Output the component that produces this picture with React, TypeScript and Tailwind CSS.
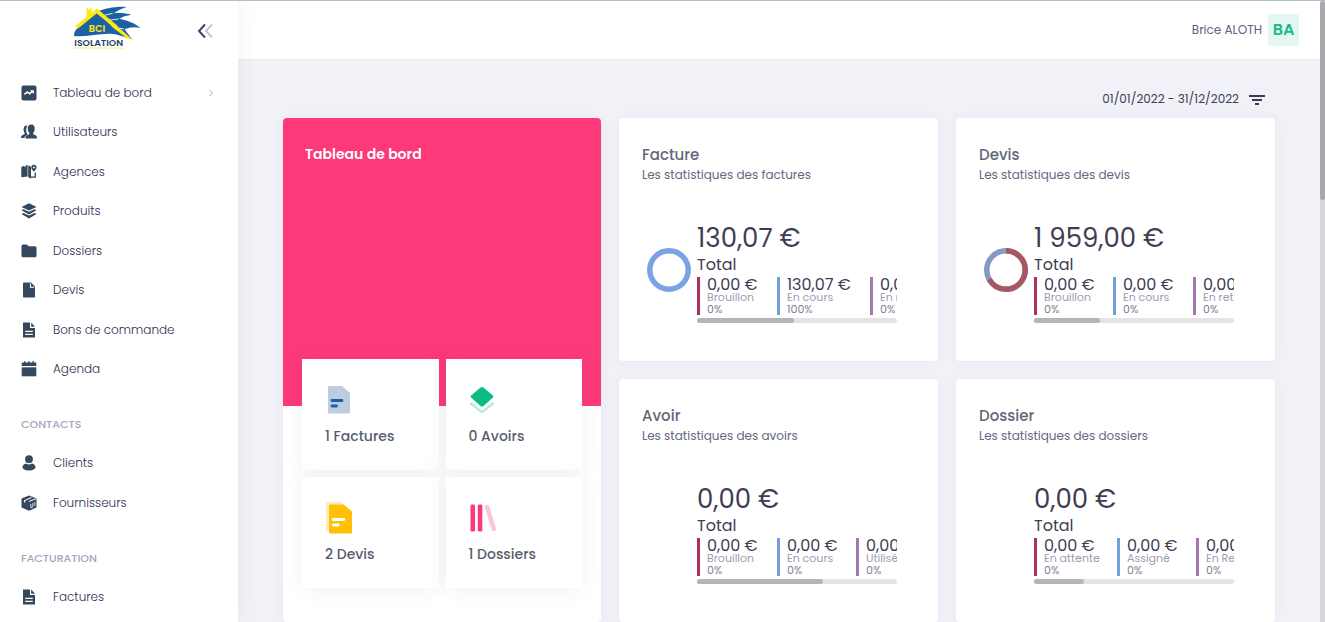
import type { ReactNode } from "react";

const ICONS: Record<string, ReactNode> = {
  board: (
    <>
      <rect x="0.5" y="0.5" width="15" height="15" rx="2" />
      <path d="M3.4 9.4 6.3 7l2.200 1.700L11.400 6.400" fill="none" stroke="#fff" strokeWidth="1.500" />
      <path d="M8.800 5.200h4v3.800z" fill="#fff" />
    </>
  ),
  users: (
    <>
      <path d="M6 1.400C3.400 1.400 2.300 3.400 2.600 6c.1 1.400.6 2.400 1.200 3.100-.1 1-.6 1.300-2 1.800C.6 11.500 0 12.200 0 14h3.400c.1-1.400 1-2.300 2.900-3.200.3-.2.2-.6-.2-1.200C5 8 4.700 4 6.600 1.500z" />
      <path d="M10.400.6C7.800.6 6.600 2.200 6.800 4.900c.1 1.900.8 3.200 1.600 4 0 1.200-.4 1.600-1.900 2.200C4.800 11.800 4.400 12.600 4.400 14.500H16c0-2-.5-2.700-2.200-3.400-1.300-.6-1.700-1-1.700-2.200.8-.8 1.500-2.100 1.600-4C13.900 2.200 12.700.6 10.400.6z" />
    </>
  ),
  map: (
    <>
      <path d="M.3 2.800h1.500V2h1.500v.8h1.300V1.300h2v11.200L.3 13.300z" />
      <path d="M7.200 1.200l2.800 1.500v12l-2.800-1.600z" />
      <path d="M12.900.8a2.600 2.600 0 0 0-2.600 2.600c0 1.900 2.600 4 2.600 4s2.600-2.100 2.600-4A2.600 2.600 0 0 0 12.900.8zm0 1.700a.9.900 0 1 1 0 1.800.9.900 0 0 1 0-1.800z" fillRule="evenodd" />
      <path d="M10 13.200h4.300V8.400" fill="none" stroke="currentColor" strokeWidth="1.300" />
    </>
  ),
  layers: (
    <>
      <path d="M8 .3 15.500 4 8 7.600.5 4z" />
      <path d="m.5 7.200 2-1L8 8.700l5.500-2.500 2 1L8 11.500z" />
      <path d="m.5 11 2-1L8 12.600 13.500 10l2 1L8 15.500z" />
    </>
  ),
  folder: <path d="M.5 3A1.500 1.500 0 0 1 2 1.500h3.800L7.600 3.300H14A1.500 1.500 0 0 1 15.500 4.800v8A1.500 1.500 0 0 1 14 14.300H2a1.500 1.500 0 0 1-1.500-1.500z" />,
  file: (
    <>
      <path d="M2.800.5H10L14 4.600v10.100a.8.800 0 0 1-.8.8H2.800a.8.800 0 0 1-.8-.8V1.300A.8.800 0 0 1 2.800.5z" />
      <path d="M9.500 1.500v3.700h3.700" fill="none" stroke="#fff" strokeWidth="1.100" />
    </>
  ),
  doc: (
    <>
      <path d="M2 .5h7v5.500h5v9.500H2z" />
      <path d="M10.200.5 14 4.700h-3.800z" />
      <path d="M4.200 9.400h7.600M4.200 12.300h7.600" stroke="#fff" strokeWidth="1.200" />
    </>
  ),
  calendar: (
    <>
      <path d="M.7 1.500H3V.3h1.500v1.200h2.700V.3h1.500v1.200h2.700V.3H13v1.200h2.300v3.600H.7z" />
      <path d="M.7 6.300h14.600v9H.7z" />
    </>
  ),
  user: (
    <>
      <circle cx="8" cy="4.200" r="3.900" />
      <path d="M1.500 12.300C1.500 10.300 3 8.700 5 8.500c1.800 1.200 4.200 1.200 6 0 2 .2 3.500 1.800 3.500 3.800 0 1.800-3 3.300-6.500 3.300s-6.500-1.500-6.500-3.300z" />
    </>
  ),
  box: (
    <>
      <path d="M8 .5 15.500 3.500v9L8 15.700.5 12.500v-9z" />
      <path d="m4 5.400 6.500-2.900M7.800 6.500 15 3.700M3.600 5v2.600" stroke="#fff" strokeWidth="1" fill="none" />
      <path d="M9.800 9v3.600M11.800 8v3.600M13.800 7.200v3.600M10 12.500l2-.8" stroke="#fff" strokeWidth=".8" fill="none" />
    </>
  ),
};

type Item = { icon: string; label: string; more?: boolean };

const MAIN: Item[] = [
  { icon: "board", label: "Tableau de bord", more: true },
  { icon: "users", label: "Utilisateurs" },
  { icon: "map", label: "Agences" },
  { icon: "layers", label: "Produits" },
  { icon: "folder", label: "Dossiers" },
  { icon: "file", label: "Devis" },
  { icon: "doc", label: "Bons de commande" },
  { icon: "calendar", label: "Agenda" },
];
const CONTACTS: Item[] = [
  { icon: "user", label: "Clients" },
  { icon: "box", label: "Fournisseurs" },
];
const BILLING: Item[] = [{ icon: "doc", label: "Factures" }];

function NavLink({ icon, label, more }: Item) {
  return (
    <li className="grid">
      <a href="#" className="flex items-center gap-4 pl-[21px] pr-[23px] text-[12px] font-light text-[#2c3150]">
        <svg viewBox="0 0 16 16" className="size-4 shrink-0 text-[#34495e]" fill="currentColor" aria-hidden="true">
          {ICONS[icon]}
        </svg>
        <span className="grow">{label}</span>
        {more && (
          <svg viewBox="0 0 8 8" className="size-2" fill="none" stroke="#c5cbf5" strokeWidth="1.200" aria-hidden="true">
            <path d="m2.500 1 3 3-3 3" />
          </svg>
        )}
      </a>
    </li>
  );
}

function NavHeading({ children }: { children: ReactNode }) {
  return (
    <h2 className="pt-[26px] pb-[10px] pl-[21px] text-[11px] leading-[18px] font-medium text-[#a2a5b9]">{children}</h2>
  );
}

function Logo() {
  return (
    <svg viewBox="219 18 204 132" className="h-11 w-[68px]" role="img" aria-label="BCI Isolation">
      <path
        d="M222 108C222 92 232 84 244 76L292 34C315 26 348 18 380 21 366 26 350 32 342 40 360 38 380 40 394 44 380 46 366 50 358 56 384 62 404 68 421 84 404 80 388 82 374 88L396 118 352 104C318 94 262 112 222 108Z"
        fill="#1b62a5"
      />
      <path d="M338 40 312 46M356 57 330 60M372 87 356 84" stroke="#fff" strokeWidth="2.500" fill="none" />
      <path d="M260 24h5v5h5v-5h5v26l-15 10z" fill="#fde910" />
      <path d="M230 82 290 33 350 82" stroke="#fde910" strokeWidth="11" fill="none" />
      <path d="M286 28 294 28 398 119 384 117 340 84z" fill="#fde910" />
      <text x="291" y="95" textAnchor="middle" fontFamily="Poppins, Inter, sans-serif" fontSize="29" fontWeight="600" fill="#fde910">BCI</text>
      <text x="296" y="137" textAnchor="middle" fontFamily="Poppins, Inter, sans-serif" fontSize="28" fontWeight="600" fill="#1d4568">ISOLATION</text>
      <path d="M221 144h150" stroke="#fcf39a" strokeWidth="5" />
    </svg>
  );
}

function Sidebar() {
  return (
    <aside className="z-10 w-[238px] shrink-0 bg-white shadow-[0_0_20px_rgba(82,63,105,0.08)]">
      <div className="flex h-[72px] items-start justify-between pt-[5px] pr-6 pl-[73px]">
        <a href="#"><Logo /></a>
        <button type="button" aria-label="Réduire le menu" className="mt-4">
          <svg viewBox="0 0 18 18" className="size-[18px]" fill="none" strokeWidth="2">
            <path d="m9 2.500-6 6.500 6 6.500" stroke="#413f72" />
            <path d="m16 2.500-6 6.500 6 6.500" stroke="#c4c5d6" />
          </svg>
        </button>
      </div>
      <nav>
        <ul className="grid h-[316px] auto-rows-fr">{MAIN.map((i) => <NavLink key={i.label} {...i} />)}</ul>
        <NavHeading>CONTACTS</NavHeading>
        <ul className="grid h-20 auto-rows-fr">{CONTACTS.map((i) => <NavLink key={i.label} {...i} />)}</ul>
        <NavHeading>FACTURATION</NavHeading>
        <ul className="grid h-10 auto-rows-fr">{BILLING.map((i) => <NavLink key={i.label} {...i} />)}</ul>
      </nav>
    </aside>
  );
}

const TILES: { label: string; icon: ReactNode }[] = [
  {
    label: "1 Factures",
    icon: (
      <>
        <path d="M4.500 3H17l8 7v19a1.500 1.500 0 0 1-1.500 1.500h-19A1.500 1.500 0 0 1 3 29V4.500A1.500 1.500 0 0 1 4.500 3z" fill="#bccde0" />
        <path d="M7 17.500h10M7 23h4.500" stroke="#1b5fa6" strokeWidth="2.800" strokeLinecap="round" />
      </>
    ),
  },
  {
    label: "0 Avoirs",
    icon: (
      <>
        <path d="M13 4q-.8 0-1.500.6L2.100 12.400q-1.200 1.100 0 2.200l9.400 8.300q1.500 1.300 3 0l9.400-8.300q1.200-1.100 0-2.200L14.500 4.600Q13.800 4 13 4z" fill="#0abb87" />
        <path d="m2 20.500 9.500 7.600q1.500 1.200 3 0l9.500-7.600" fill="none" stroke="#b6ebdb" strokeWidth="2.400" strokeLinecap="round" />
      </>
    ),
  },
  {
    label: "2 Devis",
    icon: (
      <>
        <path d="M2.500 1H15l6 5H4v24H2.500A1.500 1.500 0 0 1 1 28.500v-26A1.500 1.500 0 0 1 2.500 1z" fill="#ffebb5" />
        <path d="M5.500 3.500h13L27 10.500V31a1.500 1.500 0 0 1-1.500 1.500h-20A1.500 1.500 0 0 1 4 31V5a1.500 1.500 0 0 1 1.500-1.500z" fill="#ffc107" />
        <path d="M8.200 18.500h10.600M8.200 24h5" stroke="#fff" strokeWidth="2.800" strokeLinecap="round" />
      </>
    ),
  },
  {
    label: "1 Dossiers",
    icon: (
      <>
        <rect x="1.500" y="3.500" width="4.500" height="27" rx="1.300" fill="#fd397a" />
        <rect x="8.800" y="3.500" width="4.500" height="27" rx="1.300" fill="#fd397a" />
        <rect x="19.200" y="3.500" width="4.500" height="27" rx="1.300" fill="#fec4d7" transform="rotate(-17 21.500 17)" />
      </>
    ),
  },
];

function Overview() {
  return (
    <section className="row-span-2 overflow-hidden rounded bg-white shadow-[0_0_13px_rgba(82,63,105,0.05)]">
      <div className="h-72 bg-[#fd397a] px-[22px] pt-[22px]">
        <h1 className="text-[14px] leading-7 font-semibold text-white">Tableau de bord</h1>
      </div>
      <div className="relative -mt-[47px] grid grid-cols-2 gap-[7px] px-[19px]">
        {TILES.map((t) => (
          <a key={t.label} href="#" className="block h-[111px] bg-white px-[23px] pt-6 shadow-[0_0_20px_rgba(82,63,105,0.08)]">
            <svg viewBox="0 0 28 34" className="h-[34px] w-7" aria-hidden="true">{t.icon}</svg>
            <span className="mt-2 block text-[14px] leading-[22px] font-medium whitespace-nowrap text-[#595d6e]">{t.label}</span>
          </a>
        ))}
      </div>
    </section>
  );
}

type Stat = { value: string; label: string; pct: string; width: string };
type CardData = { title: string; sub: string; total: string; ring?: ReactNode; thumb: string; stats: Stat[] };

const BARS = ["border-[#a8325a]", "border-[#739fe2]", "border-[#a17aab]"];

const CARDS: CardData[] = [
  {
    title: "Facture",
    sub: "Les statistiques des factures",
    total: "130,07 €",
    ring: <circle cx="22" cy="22" r="19.200" stroke="#79a3e4" />,
    thumb: "w-[97px]",
    stats: [
      { value: "0,00 €", label: "Brouillon", pct: "0%", width: "w-20" },
      { value: "130,07 €", label: "En cours", pct: "100%", width: "w-[93px]" },
      { value: "0,00 €", label: "En retard", pct: "0%", width: "w-20" },
    ],
  },
  {
    title: "Devis",
    sub: "Les statistiques des devis",
    total: "1 959,00 €",
    ring: (
      <g transform="rotate(-90 22 22)">
        <circle cx="22" cy="22" r="19.200" stroke="#8698c4" />
        <circle cx="22" cy="22" r="19.200" stroke="#a85662" pathLength="100" strokeDasharray="67 33" />
      </g>
    ),
    thumb: "w-[66px]",
    stats: [
      { value: "0,00 €", label: "Brouillon", pct: "0%", width: "w-[79px]" },
      { value: "0,00 €", label: "En cours", pct: "0%", width: "w-20" },
      { value: "0,00 €", label: "En retard", pct: "0%", width: "w-20" },
    ],
  },
  {
    title: "Avoir",
    sub: "Les statistiques des avoirs",
    total: "0,00 €",
    thumb: "w-[126px]",
    stats: [
      { value: "0,00 €", label: "Brouillon", pct: "0%", width: "w-20" },
      { value: "0,00 €", label: "En cours", pct: "0%", width: "w-[79px]" },
      { value: "0,00 €", label: "Utilisé", pct: "0%", width: "w-20" },
    ],
  },
  {
    title: "Dossier",
    sub: "Les statistiques des dossiers",
    total: "0,00 €",
    thumb: "w-[50px]",
    stats: [
      { value: "0,00 €", label: "En attente", pct: "0%", width: "w-[83px]" },
      { value: "0,00 €", label: "Assigné", pct: "0%", width: "w-[79px]" },
      { value: "0,00 €", label: "En Retard", pct: "0%", width: "w-20" },
    ],
  },
];

function StatCard({ title, sub, total, ring, thumb, stats }: CardData) {
  return (
    <section className="rounded bg-white pt-[23px] pb-[38px] shadow-[0_0_13px_rgba(82,63,105,0.05)]">
      <h2 className="px-[23px] text-[15px] leading-7 font-medium text-[#646777]">{title}</h2>
      <p className="px-[23px] text-[12px] leading-3 text-[#646880]">{sub}</p>
      <div className="mt-[42px] flex items-start gap-[6px] pl-7">
        <svg viewBox="0 0 44 44" className="mt-[25px] size-11 shrink-0" fill="none" strokeWidth="5.500" aria-hidden="true">
          {ring}
        </svg>
        <div className="w-[200px]">
          <p className="text-[26px] leading-[30px] text-[#3f3d53]">{total}</p>
          <p className="text-[16px] leading-[23px] text-[#3f3d53]">Total</p>
          <div className="mt-px flex overflow-hidden">
            {stats.map((s, i) => (
              <div key={s.label} className={`shrink-0 ${s.width}`}>
                <div className={`border-l-[3px] pl-[7px] whitespace-nowrap ${BARS[i]}`}>
                  <p className="text-[16px] leading-[15px] text-[#3f3d53]">{s.value}</p>
                  <p className="text-[11px] leading-[11px] text-[#9a9eb5]">{s.label}</p>
                  <p className="text-[11px] leading-3 text-[#7d7f94]">{s.pct}</p>
                </div>
              </div>
            ))}
          </div>
          <div className="mt-[3px] h-[5px] rounded-full bg-[#e4e4e4]">
            <div className={`h-full rounded-full bg-[#b5b5b5] ${thumb}`} />
          </div>
        </div>
      </div>
    </section>
  );
}

export default function App() {
  return (
    <div className="flex h-screen overflow-hidden border-t border-[#b0bfcb] bg-[#f1f2f7] font-['Poppins','Inter',sans-serif]">
      <Sidebar />
      <div className="flex min-w-0 grow flex-col">
        <header className="flex h-[58px] shrink-0 items-center justify-end gap-[6px] bg-white pr-[21px] shadow-[0_0_4px_rgba(82,63,105,0.06)]">
          <span className="text-[12px] text-[#5d6384]">Brice ALOTH</span>
          <button type="button" className="flex h-8 w-[31px] items-center justify-center rounded bg-[#e4f7f1] text-[16px] font-semibold text-[#1abb8a]">BA</button>
        </header>
        <main className="min-h-0 grow overflow-hidden px-[45px] pt-[30px]">
          <div className="mb-[9px] flex h-5 items-center justify-end gap-[10px] pr-[10px]">
            <span className="text-[12px] text-[#3f3d53]">01/01/2022 - 31/12/2022</span>
            <button type="button" aria-label="Filtrer">
              <svg viewBox="0 0 16 12" className="h-3 w-4" stroke="#3b3a52" strokeWidth="2">
                <path d="M0 3h16M3 7h10M6 11h4" />
              </svg>
            </button>
          </div>
          <div className="grid grid-cols-[318fr_319fr_319fr] gap-[18px]">
            <Overview />
            {CARDS.map((c) => <StatCard key={c.title} {...c} />)}
          </div>
        </main>
      </div>
      <div className="w-[5px] shrink-0 bg-[#d7d8de]" aria-hidden="true">
        <div className="h-[32%] rounded-full bg-[#a9a9ad]" />
      </div>
    </div>
  );
}
